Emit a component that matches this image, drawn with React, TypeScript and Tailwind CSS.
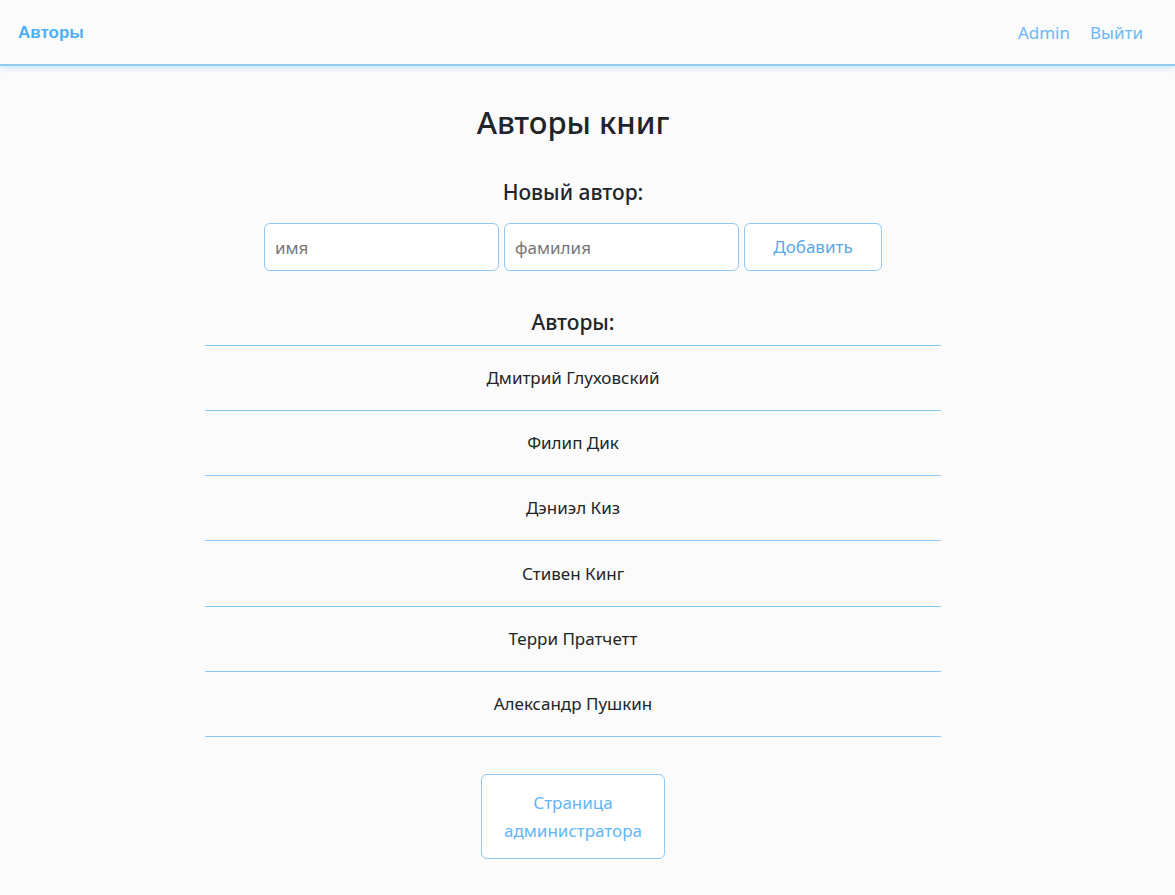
const authors = [
  "Дмитрий Глуховский",
  "Филип Дик",
  "Дэниэл Киз",
  "Стивен Кинг",
  "Терри Пратчетт",
  "Александр Пушкин",
]

const fieldClassName = "h-12 w-[235px] rounded-[6px] border border-[#8ecaf8] bg-white px-[10px] text-[17px] text-[#212529] outline-none placeholder:text-[#767676]"

export default function App() {
  return (
    <div className="min-h-[895px] bg-[#fbfbfb] font-['Noto_Sans',sans-serif] text-[#212529]">
      <nav className="flex h-[66px] items-center justify-between border-b-2 border-[#94cbf5] px-[18px] pt-[2px] shadow-[0_3px_5px_rgba(144,202,249,0.35)]">
        <span className="font-['Liberation_Sans',sans-serif] text-[17px] font-bold text-[#4cb0f7]">Авторы</span>
        <div className="flex items-center gap-5 pr-[14px] text-[17px] text-[#6ab8f7]">
          <span>Admin</span>
          <span>Выйти</span>
        </div>
      </nav>

      <main className="flex flex-col items-center pr-[29px]">
        <h1 className="mt-[34px] text-[31px] font-medium leading-[44px]">Авторы книг</h1>
        <h2 className="mt-[33px] text-[21px] font-medium leading-[30px]">Новый автор:</h2>
        <div className="mt-[16px] flex gap-[5px]">
          <input className={fieldClassName} placeholder="имя" />
          <input className={fieldClassName} placeholder="фамилия" />
          <button type="button" className="h-12 w-[138px] rounded-[6px] border border-[#8ecaf8] bg-white text-[17px] text-[#5aa8e6]">Добавить</button>
        </div>
        <h2 className="mt-[36px] text-[21px] font-medium leading-[30px]">Авторы:</h2>
        <ul className="mt-[8px] w-[736px] border-t border-[#86c8f6]">
          {authors.map((name, index) => (
            <li key={name} className={`flex items-center justify-center border-b border-[#86c8f6] text-[17px] ${index === 3 ? "h-[66px]" : "h-[65px]"}`}>
              {name}
            </li>
          ))}
        </ul>
        <button type="button" className="mt-[37px] h-[85px] w-[184px] rounded-[6px] border border-[#8ecaf8] bg-white text-[17px] leading-[28px] text-[#62b6f7]">
          Страница<br />администратора
        </button>
      </main>
    </div>
  )
}
